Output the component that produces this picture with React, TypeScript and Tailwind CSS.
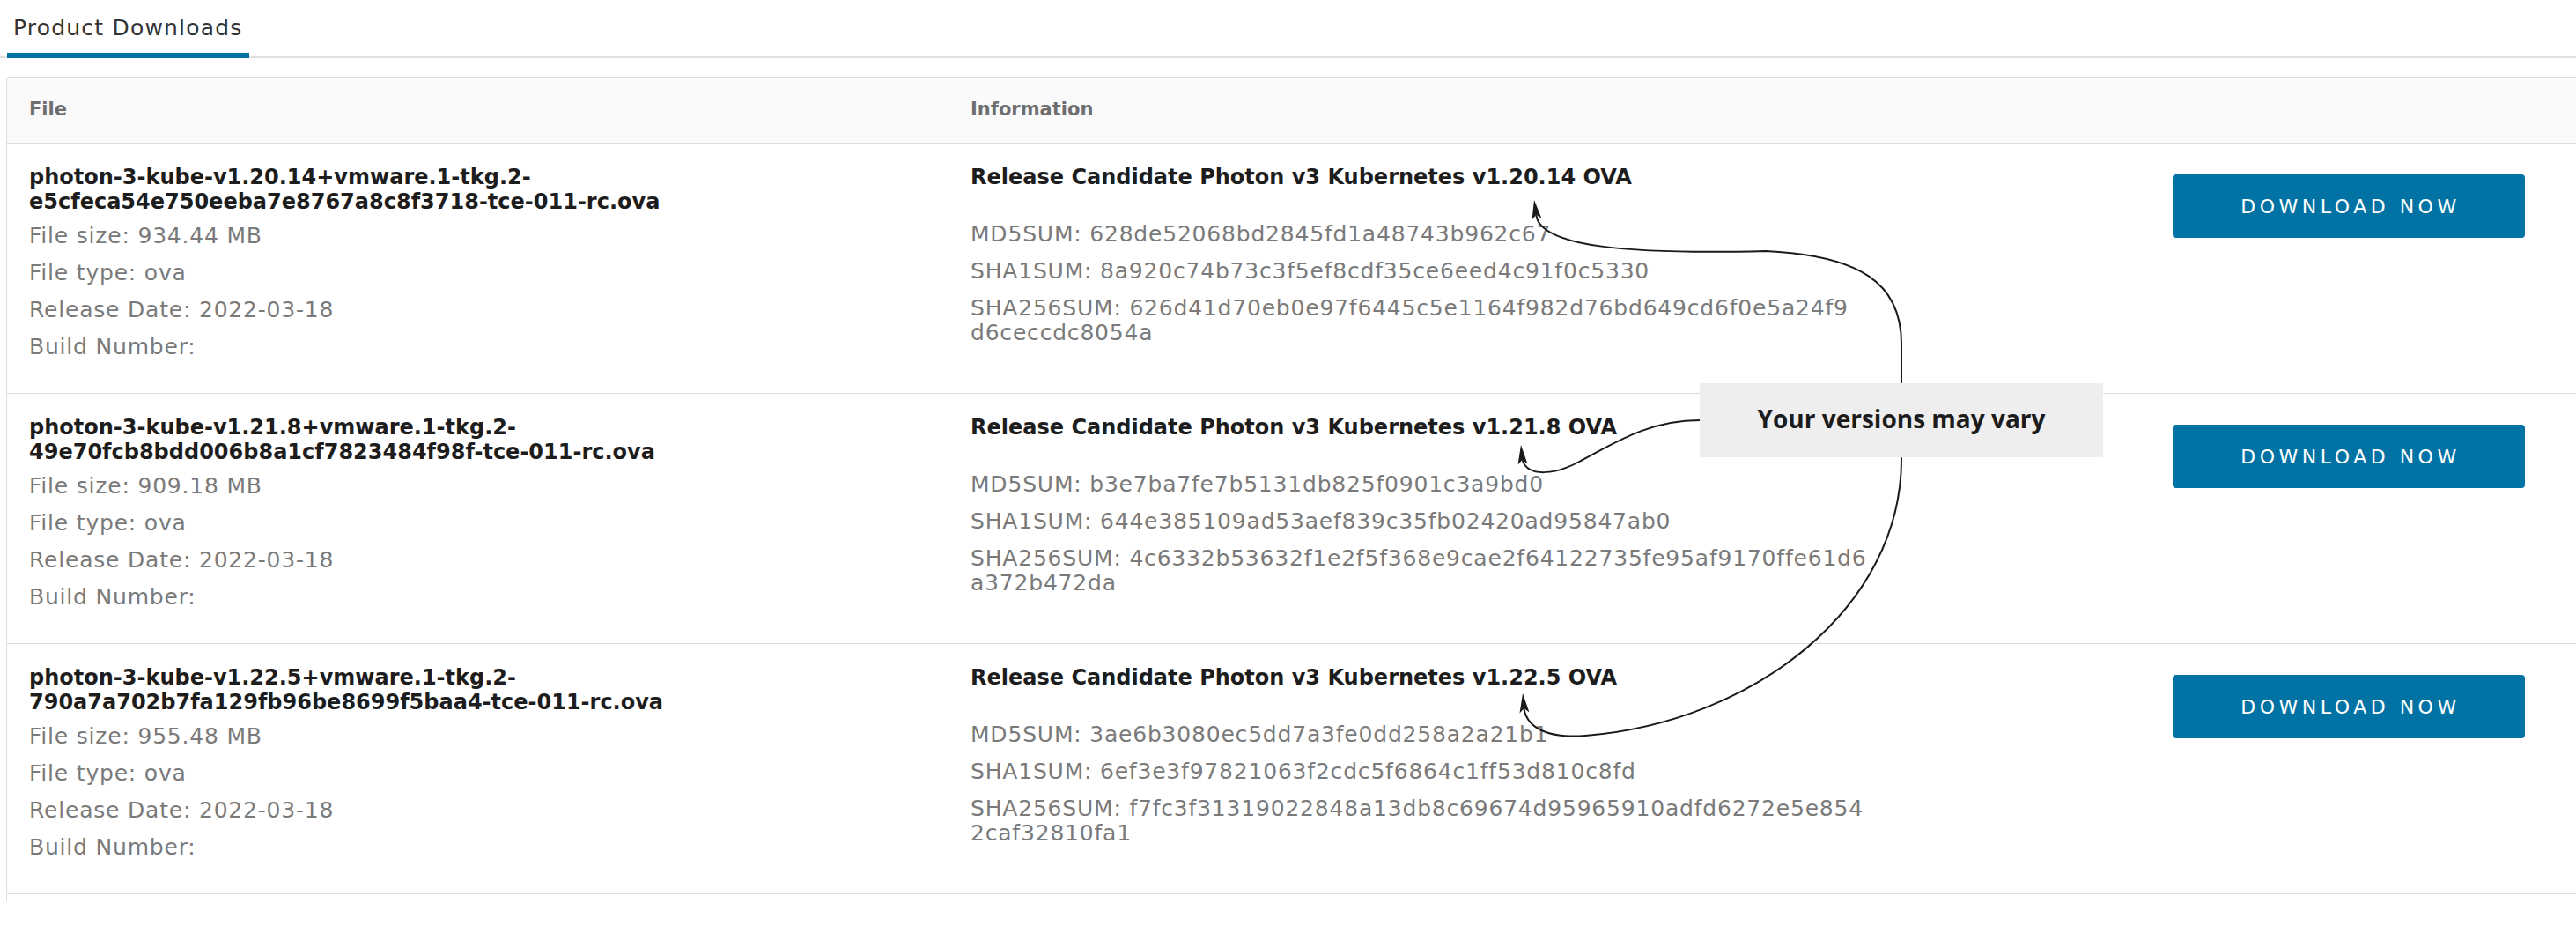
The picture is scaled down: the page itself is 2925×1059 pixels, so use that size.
import React from "react";

type Row = {
  file1: string;
  file2: string;
  size: string;
  title: string;
  md5: string;
  sha1: string;
  sha256a: string;
  sha256b: string;
};

const rows: Row[] = [
  {
    file1: "photon-3-kube-v1.20.14+vmware.1-tkg.2-",
    file2: "e5cfeca54e750eeba7e8767a8c8f3718-tce-011-rc.ova",
    size: "934.44 MB",
    title: "Release Candidate Photon v3 Kubernetes v1.20.14 OVA",
    md5: "628de52068bd2845fd1a48743b962c67",
    sha1: "8a920c74b73c3f5ef8cdf35ce6eed4c91f0c5330",
    sha256a: "626d41d70eb0e97f6445c5e1164f982d76bd649cd6f0e5a24f9",
    sha256b: "d6ceccdc8054a",
  },
  {
    file1: "photon-3-kube-v1.21.8+vmware.1-tkg.2-",
    file2: "49e70fcb8bdd006b8a1cf7823484f98f-tce-011-rc.ova",
    size: "909.18 MB",
    title: "Release Candidate Photon v3 Kubernetes v1.21.8 OVA",
    md5: "b3e7ba7fe7b5131db825f0901c3a9bd0",
    sha1: "644e385109ad53aef839c35fb02420ad95847ab0",
    sha256a: "4c6332b53632f1e2f5f368e9cae2f64122735fe95af9170ffe61d6",
    sha256b: "a372b472da",
  },
  {
    file1: "photon-3-kube-v1.22.5+vmware.1-tkg.2-",
    file2: "790a7a702b7fa129fb96be8699f5baa4-tce-011-rc.ova",
    size: "955.48 MB",
    title: "Release Candidate Photon v3 Kubernetes v1.22.5 OVA",
    md5: "3ae6b3080ec5dd7a3fe0dd258a2a21b1",
    sha1: "6ef3e3f97821063f2cdc5f6864c1ff53d810c8fd",
    sha256a: "f7fc3f31319022848a13db8c69674d95965910adfd6272e5e854",
    sha256b: "2caf32810fa1",
  },
];

function DownloadRow({ r }: { r: Row }) {
  return (
    <div className="grid h-[284px] grid-cols-[1069px_1365px_1fr] border-b border-[#dddddd]">
      <div className="pl-[25px] pt-[24px]">
        <div className="whitespace-nowrap text-[24px] font-bold leading-[28px] text-[#1d1d1d]">
          <div>{r.file1}</div>
          <div>{r.file2}</div>
        </div>
        <div className="text-[25px] leading-[28px] tracking-[0.8px] text-[#7a7a7a]">
          <div className="mt-[11px] whitespace-nowrap">File size: {r.size}</div>
          <div className="mt-[14px] whitespace-nowrap">File type: ova</div>
          <div className="mt-[14px] whitespace-nowrap">Release Date: 2022-03-18</div>
          <div className="mt-[14px] whitespace-nowrap">Build Number:</div>
        </div>
      </div>
      <div className="pl-[25px] pt-[24px]">
        <div className="whitespace-nowrap text-[24px] font-bold leading-[28px] text-[#1d1d1d]">
          {r.title}
        </div>
        <div className="text-[25px] leading-[28px] tracking-[0.8px] text-[#7a7a7a]">
          <div className="mt-[37px] whitespace-nowrap">MD5SUM: {r.md5}</div>
          <div className="mt-[14px] whitespace-nowrap">SHA1SUM: {r.sha1}</div>
          <div className="mt-[14px]">
            <div className="whitespace-nowrap">SHA256SUM: {r.sha256a}</div>
            <div className="whitespace-nowrap">{r.sha256b}</div>
          </div>
        </div>
      </div>
      <div className="pl-[25px] pt-[35px]">
        <button className="flex h-[72px] w-[400px] items-center justify-center rounded-[4px] bg-[#0072a3] pl-[4px] text-[22px] tracking-[4.5px] text-white">
          DOWNLOAD NOW
        </button>
      </div>
    </div>
  );
}

export default function App() {
  return (
    <div className="relative h-[1059px] w-full overflow-hidden bg-white font-['DejaVu_Sans',sans-serif]">
      <div className="flex h-[66px] border-b-2 border-[#e0e0e0]">
        <div className="-mb-[2px] ml-[8px] flex items-center border-b-[6px] border-[#0072a3] px-[7px] pt-[4px] text-[25px] tracking-[1.2px] text-[#333333]">
          Product Downloads
        </div>
      </div>

      <div className="ml-[7px] mt-[21px] w-[2940px] rounded-t-[3px] border-x border-t border-[#dddddd]">
        <div className="grid h-[75px] grid-cols-[1069px_1365px_1fr] items-center border-b border-[#dddddd] bg-[#fafafa] text-[21px] font-bold text-[#6e6e6e]">
          <div className="pl-[25px]">File</div>
          <div className="pl-[25px]">Information</div>
          <div />
        </div>
        {rows.map((r) => (
          <DownloadRow key={r.title} r={r} />
        ))}
        <div className="h-[8px]" />
      </div>

      <svg
        className="pointer-events-none absolute left-0 top-0"
        width="2925"
        height="1059"
        viewBox="0 0 2925 1059"
      >
        <g fill="none" stroke="#1a1a1a" strokeWidth="2" strokeLinecap="round">
          <path d="M2159,435 L2159,390 C2159,320 2110,290 2005,285 C1850,289 1750,280 1744.5,245" />
          <path d="M1930,477 C1870,477 1830,505 1795,523 C1765,540 1735,541 1729,523" />
          <path d="M2159,520 C2160,690 1990,820 1800,835 C1760,838 1735,828 1730.5,805" />
        </g>
        <g fill="#1a1a1a">
          <path d="M1742,227 L1750.5,248.1 L1744.3,243.8 L1739.5,249.5 Z" />
          <path d="M1727,505 L1734.5,526.4 L1728.5,522 L1723.5,527.4 Z" />
          <path d="M1729,787 L1736.5,808.5 L1730.5,804 L1725.5,809.5 Z" />
        </g>
      </svg>

      <div className="absolute left-[1930px] top-[435px] flex h-[84px] w-[458px] items-center justify-center bg-[#eeeeee] pb-[4px] font-['Open_Sans',sans-serif] text-[28px] font-bold text-[#1c1c1c]">
        Your versions may vary
      </div>
    </div>
  );
}
